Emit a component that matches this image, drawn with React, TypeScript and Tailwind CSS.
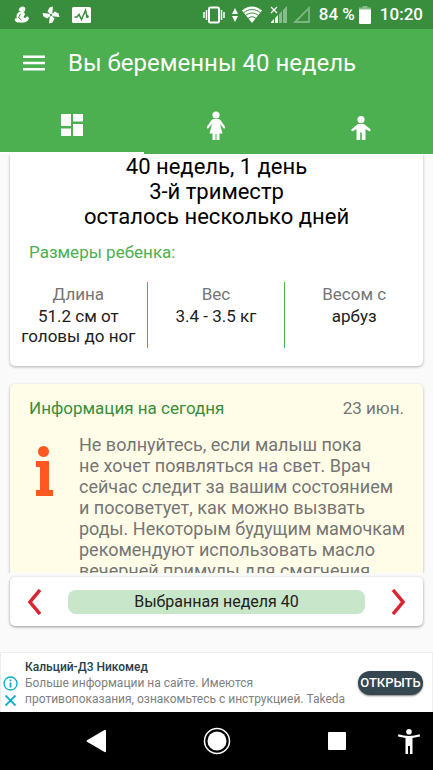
const sizes = [
    { label: 'Длина', value: '51.2 см от головы до ног' },
    { label: 'Вес', value: '3.4 - 3.5 кг' },
    { label: 'Весом с', value: 'арбуз' },
];

const StatusBar = () => {
    return (
        <div className="flex h-[29px] shrink-0 items-center justify-between bg-[#388e3c] pr-[10px] pl-[14px] text-white">
            <div className="flex items-center gap-3">
                <svg width="16" height="18" viewBox="0 0 16 18" fill="currentColor">
                    <circle cx="8.500" cy="3.200" r="2.800" />
                    <path d="M6 1.500L4.500 4.500L7 5Z" />
                    <path d="M5 6C8 4.800 11 6 11 8.500L9.500 11C10.500 12.500 12 12 12.500 10.500C14.500 10 15.500 12 14.500 13.500C13 16.500 9 17 5 16.500C2 16.500.5 15 .8 13.500C.8 12.500 2 12 3 12.500C2 10.500 2.500 7.500 5 6Z" />
                    <path d="M6.500 8L4.500 11.500L7.500 14" fill="none" stroke="#388e3c" strokeWidth="1" />
                </svg>
                <svg width="18" height="18" viewBox="0 0 18 18" fill="currentColor">
                    <path d="M8.300 8.300L5.500 5.200L7.500 1.500L11 .5L10.300 7.500Z" />
                    <path d="M8.300 8.300L5.500 5.200L7.500 1.500L11 .5L10.300 7.500Z" transform="rotate(90 9 9)" />
                    <path d="M8.300 8.300L5.500 5.200L7.500 1.500L11 .5L10.300 7.500Z" transform="rotate(180 9 9)" />
                    <path d="M8.300 8.300L5.500 5.200L7.500 1.500L11 .5L10.300 7.500Z" transform="rotate(270 9 9)" />
                </svg>
                <svg width="19" height="16" viewBox="0 0 19 16">
                    <rect width="19" height="16" rx="1.500" fill="currentColor" />
                    <path d="M2.500 10H5L7 7.500L9.500 12.500L13.500 3.500L15 9.500" fill="none" stroke="#388e3c" strokeWidth="1.600" />
                    <circle cx="15.300" cy="9.500" r="1.500" fill="#388e3c" />
                </svg>
            </div>
            <div className="flex items-center">
                <svg width="22" height="18" viewBox="0 0 22 18" fill="none" stroke="currentColor">
                    <rect x="6" y="1.500" width="10" height="15" rx="1.500" strokeWidth="2" />
                    <path d="M3.500 4V14M1 6V12M18.500 4V14M21 6V12" strokeWidth="1.500" />
                </svg>
                <svg className="ml-[7px]" width="6" height="14" viewBox="0 0 6 14" fill="currentColor">
                    <path d="M3 0L6 6H0ZM0 8H6L3 14Z" />
                </svg>
                <svg className="ml-1" width="20" height="17" viewBox="0 0 20 17" fill="currentColor">
                    <path d="M0 4.500C6-.8 14-.8 20 4.500L10 17Z" />
                    <path d="M1.500 6.800C6.500 2.500 13.500 2.500 18.500 6.800M3.500 9.500C7.500 6.200 12.500 6.200 16.500 9.500M6 12.500C8.500 10.200 11.500 10.200 14 12.500" fill="none" stroke="#388e3c" strokeWidth="1" />
                </svg>
                <svg className="ml-2" width="17" height="17" viewBox="0 0 17 17" fill="currentColor">
                    <path d="M1 17V16L4 13V17ZM5 17V12L8 9V17Z" />
                    <path d="M9 17V8L12 5V17ZM13 17V4L17 0V17Z" opacity=".4" />
                    <path d="M1 1L7 7M7 1L1 7" stroke="currentColor" strokeWidth="1.300" />
                </svg>
                <svg className="ml-[6px]" width="17" height="17" viewBox="0 0 17 17" fill="none" stroke="currentColor" opacity=".35">
                    <path d="M2 16H16V2Z" strokeWidth="1.800" />
                </svg>
                <span className="ml-[9px] text-[17px] font-medium">84 %</span>
                <svg className="ml-1" width="12" height="18" viewBox="0 0 12 18" fill="currentColor">
                    <path d="M3.500 0H8.500V1.500H12V4H0V1.500H3.500Z" opacity=".4" />
                    <path d="M0 3.500H12V17Q12 18 11 18H1Q0 18 0 17Z" />
                </svg>
                <span className="ml-[9px] text-[17px] font-medium">10:20</span>
            </div>
        </div>
    );
};

const Header = () => {
    return (
        <header className="shrink-0 bg-[#4caf50] text-white">
            <div className="flex h-[68px] items-center gap-[23px] pl-[23px]">
                <button type="button" aria-label="Меню">
                    <svg width="22" height="16" viewBox="0 0 22 16" fill="currentColor">
                        <path d="M0 .5H22V3H0ZM0 6.800H22V9.200H0ZM0 13H22V15.500H0Z" />
                    </svg>
                </button>
                <h1 className="text-2xl">Вы беременны 40 недель</h1>
            </div>
            <nav className="grid h-[57px] grid-cols-3">
                <button type="button" aria-label="Обзор" className="flex items-center justify-center border-b-2 border-white">
                    <svg width="22" height="22" viewBox="0 0 22 22" fill="currentColor">
                        <path d="M0 0H10V12H0ZM12 0H22V7.500H12ZM0 14.500H10V22H0ZM12 10H22V22H12Z" />
                    </svg>
                </button>
                <button type="button" aria-label="Мама" className="flex items-center justify-center">
                    <svg width="20" height="30" viewBox="0 0 20 30" fill="currentColor">
                        <circle cx="10" cy="4" r="3.600" />
                        <path d="M7.500 8H12.500Q14 8 14.800 9.500L19.300 16Q19.500 17.800 17.800 17.500L14 13L16.500 22.500H13.500V29H6.500V22.500H3.500L6 13L2.200 17.500Q.5 17.800.7 16L5.200 9.500Q6 8 7.500 8Z" />
                        <path d="M10 23V29" stroke="#4caf50" strokeWidth="1" />
                    </svg>
                </button>
                <button type="button" aria-label="Ребенок" className="flex items-center justify-center pt-1">
                    <svg width="20" height="24" viewBox="0 0 20 24" fill="currentColor">
                        <circle cx="10" cy="3.600" r="3.600" />
                        <path d="M7 8H13L19.200 13Q20.500 15 18.300 15.300L14.500 13V24H10.800V16.500H9.200V24H5.500V13L1.700 15.300Q-.5 15 .8 13Z" />
                    </svg>
                </button>
            </nav>
        </header>
    );
};

const SummaryCard = () => {
    return (
        <section className="rounded-b-[5px] bg-white pb-[18px] shadow-[0_1px_3px_rgba(0,0,0,0.3)]">
            <div className="text-center text-[22px] leading-[25px] text-black">
                <p>40 недель, 1 день</p>
                <p>3-й триместр</p>
                <p>осталось несколько дней</p>
            </div>
            <h2 className="mt-[11px] px-[19px] text-[17px] leading-6 text-[#4caf50]">Размеры ребенка:</h2>
            <dl className="mt-[18px] grid h-[66px] grid-cols-3 divide-x divide-[#4caf50] text-center">
                {sizes.map((size) => (
                    <div key={size.label} className="px-2">
                        <dt className="text-[17px] leading-6 text-[#757575]">{size.label}</dt>
                        <dd className="text-[17px] leading-5 text-[#212121]">{size.value}</dd>
                    </div>
                ))}
            </dl>
        </section>
    );
};

const InfoCard = () => {
    return (
        <section className="mt-[18px] rounded-[5px] bg-[#fffde7] px-[19px] pt-3 shadow-[0_1px_3px_rgba(0,0,0,0.3)]">
            <div className="flex justify-between text-[17px] leading-6">
                <h2 className="text-[#388e3c]">Информация на сегодня</h2>
                <time className="text-[#757575]">23 июн.</time>
            </div>
            <div className="mt-[14px] flex">
                <svg className="mt-3 mr-[26px] ml-[7px] shrink-0" width="17" height="50" viewBox="0 0 17 50" fill="#ff5722">
                    <circle cx="7.500" cy="5.500" r="5.500" />
                    <path d="M0 15H13V44H17V50H0V44H4V21H0Z" />
                </svg>
                <p className="text-[18px] leading-[21px] whitespace-nowrap text-[#757575]">
                    Не волнуйтесь, если малыш пока<br />
                    не хочет появляться на свет. Врач<br />
                    сейчас следит за вашим состоянием<br />
                    и посоветует, как можно вызвать<br />
                    роды. Некоторым будущим мамочкам<br />
                    рекомендуют использовать масло<br />
                    вечерней примулы для смягчения
                </p>
            </div>
        </section>
    );
};

const WeekPicker = () => {
    return (
        <div className="mx-[10px] mt-1 mb-[26px] flex h-[49px] shrink-0 items-center justify-between rounded-[5px] bg-white px-[17px] shadow-[0_1px_3px_rgba(0,0,0,0.4)]">
            <button type="button" aria-label="Предыдущая неделя">
                <svg width="15" height="26" viewBox="0 0 15 26" fill="none" stroke="#d9232e" strokeWidth="3.500">
                    <path d="M13 1L3 13L13 25" />
                </svg>
            </button>
            <button type="button" className="mx-[26px] h-6 flex-1 rounded-lg bg-[#c8e6c9] text-base leading-6 text-[#212121]">
                Выбранная неделя 40
            </button>
            <button type="button" aria-label="Следующая неделя">
                <svg width="15" height="26" viewBox="0 0 15 26" fill="none" stroke="#d9232e" strokeWidth="3.500">
                    <path d="M2 1L12 13L2 25" />
                </svg>
            </button>
        </div>
    );
};

const AdBanner = () => {
    return (
        <aside className="flex h-[60px] shrink-0 items-center border border-b-0 border-[#eeeeee] bg-white pr-[9px]">
            <div className="mt-4 flex w-6 shrink-0 flex-col items-center gap-1 pr-[6px] text-[#00aecd]">
                <svg width="15" height="15" viewBox="0 0 15 15" fill="none" stroke="currentColor">
                    <circle cx="7.500" cy="7.500" r="6.500" strokeWidth="1.300" />
                    <path d="M7.500 6.500V11.500M7.500 3.500V5.200" strokeWidth="1.800" />
                </svg>
                <svg width="11" height="11" viewBox="0 0 11 11" stroke="currentColor" strokeWidth="1.800">
                    <path d="M.5.5L10.500 10.500M10.500.5L.5 10.500" />
                </svg>
            </div>
            <div className="min-w-0 flex-1 text-xs leading-4 whitespace-nowrap text-[#808080]">
                <p className="font-medium text-[#263f4a]">Кальций-Д3 Никомед</p>
                <p>
                    Больше информации на сайте. Имеются<br />
                    противопоказания, ознакомьтесь с инструкцией. Takeda
                </p>
            </div>
            <a href="#" className="flex h-6 w-[65px] shrink-0 items-center justify-center rounded-full bg-[#37474f] text-[13px] font-medium text-white shadow-[0_1px_2px_rgba(0,0,0,0.5)]">
                ОТКРЫТЬ
            </a>
        </aside>
    );
};

const NavigationBar = () => {
    return (
        <nav className="flex h-[58px] shrink-0 items-center bg-black text-white">
            <div className="flex flex-1 justify-between pl-[86px]">
                <button type="button" aria-label="Назад">
                    <svg width="20" height="24" viewBox="0 0 20 24" fill="currentColor">
                        <path d="M1 11.200L18.500 1Q20 .5 20 2V22Q20 23.500 18.500 23L1 12.800Q0 12 1 11.200Z" />
                    </svg>
                </button>
                <button type="button" aria-label="Домой">
                    <svg width="28" height="28" viewBox="0 0 28 28">
                        <circle cx="14" cy="14" r="12.500" fill="none" stroke="currentColor" strokeWidth="1.500" />
                        <circle cx="14" cy="14" r="9.500" fill="currentColor" />
                    </svg>
                </button>
                <button type="button" aria-label="Недавние">
                    <svg width="18" height="18" viewBox="0 0 18 18">
                        <rect width="18" height="18" rx="1" fill="currentColor" />
                    </svg>
                </button>
            </div>
            <button type="button" aria-label="Специальные возможности" className="pr-[13px] pl-[52px]">
                <svg width="22" height="25" viewBox="0 0 22 25" fill="currentColor">
                    <circle cx="11" cy="2.800" r="2.800" />
                    <path d="M.3 5.300Q11 8.500 21.700 5.300L22 7.500L14.500 9V25H12V17H10V25H7.500V9L0 7.500Z" />
                </svg>
            </button>
        </nav>
    );
};

const App = () => {
    return (
        <div className="flex h-screen flex-col overflow-hidden bg-[#fafafa] font-[Roboto,sans-serif]">
            <StatusBar />
            <Header />
            <main className="min-h-0 flex-1 overflow-hidden px-[10px]">
                <SummaryCard />
                <InfoCard />
            </main>
            <WeekPicker />
            <AdBanner />
            <NavigationBar />
        </div>
    );
};

export default App;
